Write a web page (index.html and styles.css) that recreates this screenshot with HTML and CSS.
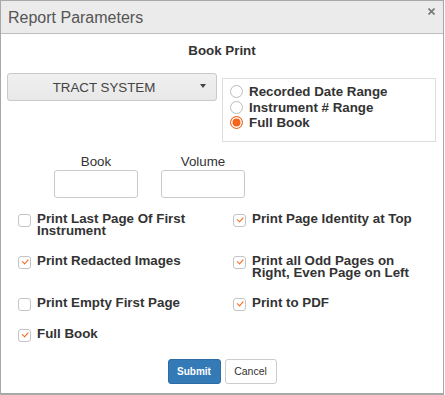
FILE: index.html
```html
<!DOCTYPE html>
<html lang="en">
<head>
    <meta charset="UTF-8">
    <title>Report Parameters</title>
    <link rel="stylesheet" href="styles.css">
</head>
<body>
    <div class="dialog">
        <div class="dialog-header">
            <span class="dialog-title">Report Parameters</span>
            <button type="button" class="close-btn" aria-label="Close">
                <svg width="7" height="7" viewBox="0 0 7 7">
                    <path d="M0.5 0.5 L6.5 6.5 M6.5 0.5 L0.5 6.5" stroke="#777" stroke-width="1.6"/>
                </svg>
            </button>
        </div>

        <div class="dialog-body">
            <h2 class="report-name">Book Print</h2>

            <div class="top-row">
                <button type="button" class="dropdown">
                    <span class="dropdown-text">TRACT SYSTEM</span>
                    <span class="caret"></span>
                </button>
                <div class="range-box">
                    <label class="radio-item"><input type="radio" name="range"> Recorded Date Range</label>
                    <label class="radio-item"><input type="radio" name="range"> Instrument # Range</label>
                    <label class="radio-item"><input type="radio" name="range" checked> Full Book</label>
                </div>
            </div>

            <div class="book-fields">
                <div class="field">
                    <label class="field-label" for="book">Book</label>
                    <input type="text" id="book" class="field-input">
                </div>
                <div class="field">
                    <label class="field-label" for="volume">Volume</label>
                    <input type="text" id="volume" class="field-input">
                </div>
            </div>

            <div class="options">
                <label class="check-item"><input type="checkbox"><span>Print Last Page Of First Instrument</span></label>
                <label class="check-item"><input type="checkbox" checked><span>Print Page Identity at Top</span></label>
                <label class="check-item"><input type="checkbox" checked><span>Print Redacted Images</span></label>
                <label class="check-item"><input type="checkbox" checked><span>Print all Odd Pages on Right, Even Page on Left</span></label>
                <label class="check-item"><input type="checkbox"><span>Print Empty First Page</span></label>
                <label class="check-item"><input type="checkbox" checked><span>Print to PDF</span></label>
                <label class="check-item"><input type="checkbox" checked><span>Full Book</span></label>
            </div>

            <div class="actions">
                <button type="button" class="btn btn-primary">Submit</button>
                <button type="button" class="btn btn-default">Cancel</button>
            </div>
        </div>
    </div>
</body>
</html>
```

FILE: styles.css
```css
/* Base */
* {
    margin: 0;
    padding: 0;
    box-sizing: border-box;
}

body {
    font-family: 'Liberation Sans', Arial, sans-serif;
    font-size: 13.33px;
    color: #333;
    background: #fff;
}

/* Dialog */
.dialog {
    width: 444px;
    height: 395px;
    border: 1px solid #a8a8a8;
    border-bottom-width: 2px;
    background: #fff;
}

.dialog-header {
    height: 33px;
    display: flex;
    align-items: center;
    justify-content: space-between;
    padding: 1px 0 0 7px;
    background: #ebebeb;
    border-bottom: 1px solid #bdbdbd;
}

.dialog-title {
    font-size: 16px;
    color: #555;
}

.close-btn {
    align-self: flex-start;
    margin: 6px 8px 0 0;
    width: 7px;
    height: 7px;
    border: none;
    background: none;
    display: flex;
}

.report-name {
    margin-top: 9px;
    font-size: 13.33px;
    line-height: 16px;
    text-align: center;
    color: #333;
}

/* Report type + range */
.top-row {
    display: flex;
    align-items: flex-start;
    margin-top: 14px;
    padding-left: 6px;
}

.dropdown {
    width: 210px;
    height: 28px;
    display: flex;
    align-items: center;
    padding-right: 10px;
    background: linear-gradient(#f0f0f0, #e8e8e8);
    border: 1px solid #c9c9c9;
    border-radius: 3px;
    font-family: inherit;
    font-size: 13.33px;
    color: #444;
}

.dropdown-text {
    flex: 1;
    text-align: center;
}

.caret {
    width: 0;
    height: 0;
    margin-top: -3px;
    border-top: 4px solid #444;
    border-left: 3px solid transparent;
    border-right: 3px solid transparent;
}

.range-box {
    width: 214px;
    margin: 5px 0 0 5px;
    padding: 5px 8px 10px 7px;
    border: 1px solid #dcdcdc;
}

.radio-item {
    display: flex;
    align-items: center;
    gap: 6px;
    height: 15.5px;
    font-weight: bold;
    color: #333;
}

.radio-item input {
    appearance: none;
    width: 13px;
    height: 13px;
    border: 1px solid #bbb;
    border-radius: 50%;
    background: #fff;
}

.radio-item input:checked {
    border: 1.5px solid #f4661b;
    background: #f4661b;
    box-shadow: inset 0 0 0 1.5px #fff;
}

/* Book / Volume */
.book-fields {
    display: flex;
    gap: 23px;
    margin-top: 12px;
    padding-left: 53px;
}

.field {
    display: flex;
    flex-direction: column;
    align-items: center;
}

.field-label {
    line-height: 16px;
    color: #333;
}

.field-input {
    width: 84px;
    height: 28px;
    border: 1px solid #c9c9c9;
    border-radius: 3px;
}

/* Options */
.options {
    display: grid;
    grid-template-columns: 215px 1fr;
    row-gap: 17px;
    margin-top: 15px;
    padding: 0 8px 0 17px;
}

.check-item {
    display: flex;
    align-items: flex-start;
    gap: 6px;
    line-height: 12.5px;
    font-weight: bold;
    color: #333;
}

.check-item span {
    max-width: 185px;
}

.check-item input {
    appearance: none;
    flex-shrink: 0;
    position: relative;
    width: 13px;
    height: 13px;
    margin-top: 1px;
    border: 1px solid #c4c4c4;
    border-radius: 3px;
    background: #fff;
}

.check-item input:checked::after {
    content: '';
    position: absolute;
    left: 3px;
    top: 2.5px;
    width: 5px;
    height: 2.5px;
    border-left: 1.5px solid #f4661b;
    border-bottom: 1.5px solid #f4661b;
    transform: rotate(-48deg);
}

/* Buttons */
.actions {
    display: flex;
    justify-content: center;
    gap: 4px;
    margin-top: 17px;
}

.btn {
    height: 25px;
    border-radius: 3px;
    font-family: inherit;
}

.btn-primary {
    width: 53px;
    background: #337ab7;
    border: 1px solid #2e6da4;
    color: #fff;
    font-weight: bold;
    font-size: 10px;
}

.btn-default {
    width: 52px;
    background: #fff;
    border: 1px solid #ccc;
    color: #333;
    font-size: 10.5px;
}
```
